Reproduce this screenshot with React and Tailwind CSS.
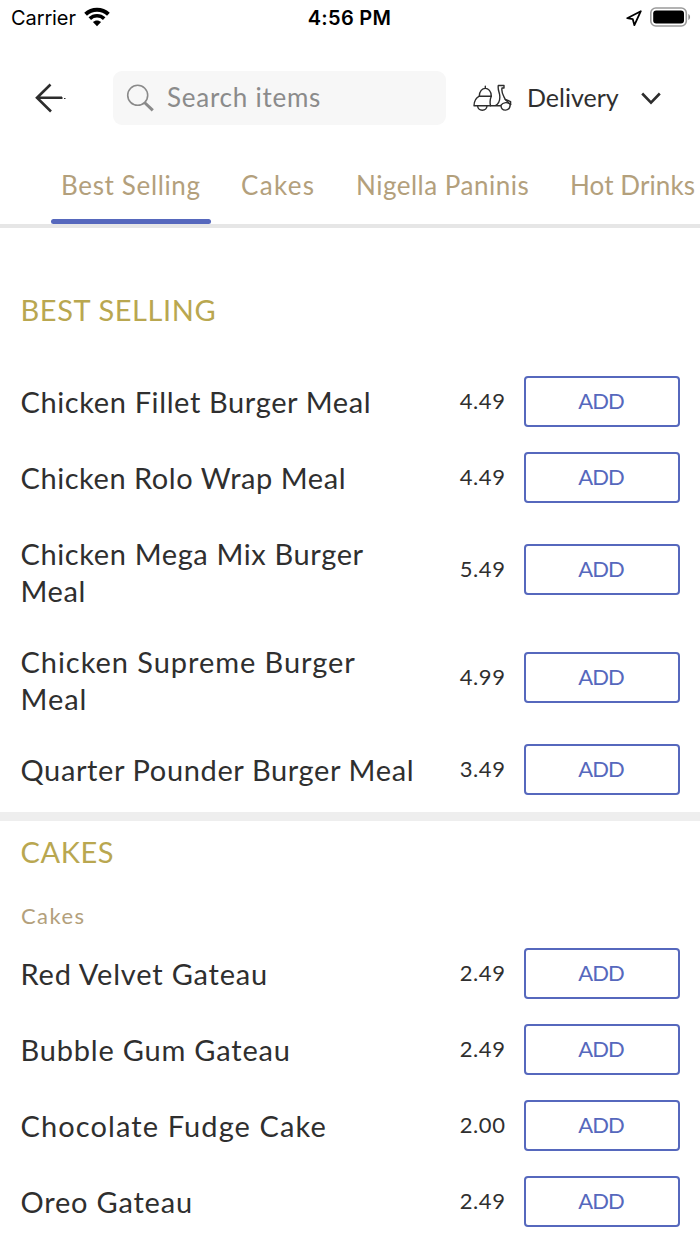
import React, { useState } from 'react';

const TABS = [
  { label: 'Best Selling', className: 'w-[139px] tracking-[0.65px]' },
  { label: 'Cakes', className: 'w-[74px] tracking-[1.3px]' },
  { label: 'Nigella Paninis', className: 'w-[173px] tracking-[0.5px]' },
  { label: 'Hot Drinks', className: 'w-[125px] tracking-[0.1px]' },
];

const BEST_SELLING = [
  { name: 'Chicken Fillet Burger Meal', price: '4.49' },
  { name: 'Chicken Rolo Wrap Meal', price: '4.49', tracking: 'tracking-[0.55px]' },
  { name: 'Chicken Mega Mix Burger Meal', price: '5.49' },
  { name: 'Chicken Supreme Burger Meal', price: '4.99', tracking: 'tracking-[0.95px]' },
  { name: 'Quarter Pounder Burger Meal', price: '3.49' },
];

const CAKES = [
  { name: 'Red Velvet Gateau', price: '2.49', tracking: 'tracking-[0.8px]' },
  { name: 'Bubble Gum Gateau', price: '2.49', tracking: 'tracking-[0.8px]' },
  { name: 'Chocolate Fudge Cake', price: '2.00', tracking: 'tracking-[1.1px]' },
  { name: 'Oreo Gateau', price: '2.49', tracking: 'tracking-[0.8px]' },
];

const App = () => {
  const [activeTab, setActiveTab] = useState('Best Selling');

  return (
    <div className="flex h-[1244px] w-[700px] flex-col overflow-hidden bg-white font-['Lato',sans-serif] text-[#2f2f2f]">
      <StatusBar />

      <header className="flex h-[124px] shrink-0 items-center pl-[35px]">
        <button type="button" aria-label="Back">
          <BackIcon />
        </button>
        <div className="ml-[47px] flex h-[54px] w-[333px] items-center rounded-[9px] bg-[#f7f7f7] pl-[13px]">
          <SearchIcon />
          <span className="ml-[12px] pb-[2px] text-[26px] leading-none tracking-[0.75px] text-[#8b8b8b]">Search items</span>
        </div>
        <button type="button" className="ml-[27px] flex items-center">
          <ScooterIcon />
          <span className="ml-[15px] w-[92px] pb-[2px] text-left text-[25px] leading-none">Delivery</span>
          <ChevronIcon />
        </button>
      </header>

      <nav className="flex h-[68px] shrink-0 gap-[20px] border-b-[4px] border-[#e6e6e6] pl-[51px]">
        {TABS.map((tab) => (
          <button
            key={tab.label}
            type="button"
            onClick={() => setActiveTab(tab.label)}
            className="flex shrink-0 flex-col items-start"
          >
            <span className="flex h-[59px] items-center pb-[9px] pl-[10px] pr-[11px]">
              <span className={`${tab.className} whitespace-nowrap text-left text-[26px] leading-none text-[#b3a07c]`}>
                {tab.label}
              </span>
            </span>
            {activeTab === tab.label ? <span className="h-[5px] w-full rounded-full bg-[#5668bd]" /> : null}
          </button>
        ))}
      </nav>

      <section className="h-[584px] shrink-0 pt-[64px]">
        <SectionTitle>BEST SELLING</SectionTitle>
        <div className="mt-[35px]">
          {BEST_SELLING.map((item) => (
            <MenuRow key={item.name} {...item} />
          ))}
        </div>
      </section>

      <div className="h-[9px] shrink-0 bg-[#eeeeee]" />

      <section className="pt-[13px]">
        <SectionTitle>CAKES</SectionTitle>
        <p className="mt-[30px] h-[35px] pl-[21px] text-[22px] leading-[32px] tracking-[1.4px] text-[#b3a07c]">Cakes</p>
        {CAKES.map((item) => (
          <MenuRow key={item.name} {...item} />
        ))}
      </section>
    </div>
  );
};

const SectionTitle = ({ children }) => (
  <h2 className="h-[36px] pl-[20.5px] text-[29px] leading-[36px] tracking-[0.6px] text-[#b9a750]">{children}</h2>
);

const MenuRow = ({ name, price, tracking = 'tracking-[0.62px]' }) => (
  <div className="flex min-h-[76px] items-center pl-[20.5px] pr-[20.5px]">
    <p className={`${tracking} w-[396px] self-start pb-[14px] pt-[20px] text-[29px] leading-[37px]`}>{name}</p>
    <span className="w-[89px] text-right text-[22px] leading-none tracking-[0.6px]">{price}</span>
    <button
      type="button"
      className="ml-[18px] h-[51px] w-[156px] rounded-[4px] border-2 border-[#5668bd] pr-[1px] text-[22px] leading-none tracking-[-0.9px] text-[#5668bd]"
    >
      ADD
    </button>
  </div>
);

const StatusBar = () => (
  <div className="flex h-[36px] shrink-0 items-center pl-[11px] pr-[9px] font-['Inter',sans-serif] text-black">
    <div className="flex flex-1 items-center gap-[8px]">
      <span className="text-[20px] leading-none tracking-[-0.1px]">Carrier</span>
      <WifiIcon />
    </div>
    <span className="mr-[3px] text-[20px] font-semibold leading-none tracking-[0.3px]">4:56 PM</span>
    <div className="flex flex-1 items-center justify-end gap-[7px]">
      <LocationIcon />
      <BatteryIcon />
    </div>
  </div>
);

const WifiIcon = () => (
  <svg className="mb-[2px]" width="26" height="20" viewBox="0 0 26 20" fill="none" stroke="#000">
    <path d="M1.6 7.2C8 1.2 18 1.2 24.4 7.2" strokeWidth="4" />
    <path d="M5.8 11.6C9.8 7.8 16.2 7.8 20.2 11.6" strokeWidth="3.6" />
    <path d="M13 19.2L8.9 15C11.2 12.9 14.8 12.9 17.1 15Z" fill="#000" stroke="none" />
  </svg>
);

const LocationIcon = () => (
  <svg width="16" height="17" viewBox="0 0 16 17" fill="none" stroke="#000" strokeWidth="1.8" strokeLinejoin="round">
    <path d="M14.8 1.2L1.2 8.2L6.8 9.2L8.4 15.2Z" />
  </svg>
);

const BatteryIcon = () => (
  <svg className="mb-[2px]" width="42" height="20" viewBox="0 0 42 20">
    <rect x="1.8" y="1" width="35.5" height="18" rx="5" fill="none" stroke="#9b9b9b" strokeWidth="1.6" />
    <rect x="4.2" y="3.5" width="30.8" height="13" rx="3" fill="#000" />
    <path d="M39.4 7C41.6 8 41.6 12 39.4 13Z" fill="#8b8b8b" />
  </svg>
);

const BackIcon = () => (
  <svg width="31" height="30" viewBox="0 0 31 30" fill="none" stroke="#2d2d2d" strokeWidth="2.6">
    <path d="M15.5 1.5L2 14.8L16 28.5M2 14.8H27" />
    <path d="M25 15H28M29 15.5H30.5" strokeWidth="1" />
  </svg>
);

const SearchIcon = () => (
  <svg width="29" height="28" viewBox="0 0 29 28" fill="none" stroke="#8a8a8a">
    <circle cx="11.7" cy="11.3" r="10" strokeWidth="1.6" />
    <path d="M18.5 18.5L26.8 26.4" strokeWidth="3" />
  </svg>
);

const ScooterIcon = () => (
  <svg width="39" height="28" viewBox="0 0 39 28" fill="none" stroke="#2d2d2d" strokeWidth="1.4" strokeLinejoin="round" strokeLinecap="round">
    {/* delivery dome */}
    <path d="M6.3 12.2C6.3 1.8 18.3 1.8 18.3 12.2ZM12.3 4.3V2.3" />
    {/* seat and footboard */}
    <path d="M6.3 12.2C3.2 13.8 1.1 17.5 1 21.7H22.5C26 19.5 27.3 15 26.6 10.5C26.2 7.8 24.6 5.6 25.3 1.5H31V4H29C28 9 30.5 11.5 32.3 15.5L37.6 17.6V20.6C34.8 17.6 30.4 18 27.4 21.7H22.5" />
    <path d="M18.3 12.2C17 15 16.8 18.4 17.5 21.7M32.3 15.5L37.6 20.6" />
    {/* wheels */}
    <path d="M4.6 22C5.2 27.6 13.4 27.6 14 22M28 21.7C28.5 27.8 36.8 27.8 37.2 20.6" />
  </svg>
);

const ChevronIcon = () => (
  <svg className="ml-[22px]" width="20" height="13" viewBox="0 0 20 13" fill="none" stroke="#2d2d2d" strokeWidth="2.6">
    <path d="M1.2 1.5L10 10.6L18.8 1.5" />
  </svg>
);

export default App;
